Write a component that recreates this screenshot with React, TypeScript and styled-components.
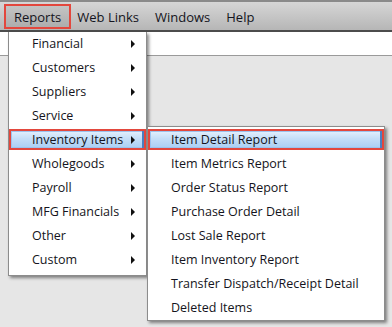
import styled, { createGlobalStyle } from "styled-components";

const GlobalStyle = createGlobalStyle`
  html, body {
    margin: 0;
    padding: 0;
    background: #e6e6e6;
  }
  body {
    font-family: "Open Sans", "Noto Sans", sans-serif;
    font-size: 12.5px;
    color: #141420;
  }
`;

const Page = styled.div`
  width: 392px;
  height: 327px;
  overflow: hidden;
  position: relative;
  background: #e6e6e6;
`;

const MenuBar = styled.nav`
  display: flex;
  align-items: center;
  height: 28px;
  padding: 0 6px;
  border-top: 2px solid #8a8a8a;
  border-bottom: 2px solid #4c4c4c;
  background: linear-gradient(#d6d6d6, #b6b6b6);
  position: relative;
`;

const BarItem = styled.div<{ $active?: boolean }>`
  height: 20px;
  display: flex;
  align-items: center;
  padding: 1px 8px 0;
  font-size: 13px;
  position: relative;
  ${(p) =>
    p.$active &&
    `
    outline: 2px solid #e3473d;
    background: linear-gradient(#c4c4c4, #adadad);
  `}
`;

const Toolbar = styled.div`
  height: 23px;
  background: #fff;
  border-bottom: 1px solid #9a9a9a;
`;

const Dropdown = styled.ul`
  position: absolute;
  top: 26px;
  left: 2px;
  width: 137px;
  margin: 0;
  padding: 0 0 3px;
  list-style: none;
  background: #fff;
  border: 1px solid #8c8c8c;
  border-top: none;
  font-size: 12.5px;
  box-shadow: 2px 2px 3px rgba(0, 0, 0, 0.45);
  z-index: 10;
`;

const SubMenu = styled.ul`
  position: absolute;
  top: -2px;
  left: 138px;
  width: 236px;
  margin: 0;
  padding: 1px 0 0;
  list-style: none;
  background: #fff;
  border: 1px solid #8c8c8c;
  box-shadow: 2px 2px 3px rgba(0, 0, 0, 0.45);
`;

const Item = styled.li<{ $selected?: boolean }>`
  position: relative;
  height: 24px;
  display: flex;
  align-items: center;
  padding-left: 23px;
  padding-right: 11px;
  white-space: nowrap;
  &::before {
    content: "";
    display: ${(p) => (p.$selected ? "block" : "none")};
    position: absolute;
    left: 0;
    right: 0;
    top: 1px;
    bottom: 2px;
    border: 2px solid #e3473d;
    background: linear-gradient(#e4f0fd, #c4def8 45%, #aacff4);
    box-shadow: inset -2px 0 0 #4a7fc0, inset 0 0 0 1px #9cc3ee;
  }
`;

const Label = styled.span`
  flex: 1;
  position: relative;
`;

const Arrow = styled.span`
  position: relative;
  width: 0;
  height: 0;
  border-left: 4px solid #111;
  border-top: 4px solid transparent;
  border-bottom: 4px solid transparent;
`;

const categories = [
  "Financial",
  "Customers",
  "Suppliers",
  "Service",
  "Inventory Items",
  "Wholegoods",
  "Payroll",
  "MFG Financials",
  "Other",
  "Custom",
];

const inventoryReports = [
  "Item Detail Report",
  "Item Metrics Report",
  "Order Status Report",
  "Purchase Order Detail",
  "Lost Sale Report",
  "Item Inventory Report",
  "Transfer Dispatch/Receipt Detail",
  "Deleted Items",
];

export default function App() {
  return (
    <Page>
      <GlobalStyle />
      <MenuBar>
        <BarItem $active>
          Reports
          <Dropdown>
            {categories.map((c) => (
              <Item key={c} $selected={c === "Inventory Items"}>
                <Label>{c}</Label>
                <Arrow />
                {c === "Inventory Items" && (
                  <SubMenu>
                    {inventoryReports.map((r, i) => (
                      <Item key={r} $selected={i === 0}>
                        <Label>{r}</Label>
                      </Item>
                    ))}
                  </SubMenu>
                )}
              </Item>
            ))}
          </Dropdown>
        </BarItem>
        <BarItem>Web Links</BarItem>
        <BarItem>Windows</BarItem>
        <BarItem>Help</BarItem>
      </MenuBar>
      <Toolbar />
    </Page>
  );
}
